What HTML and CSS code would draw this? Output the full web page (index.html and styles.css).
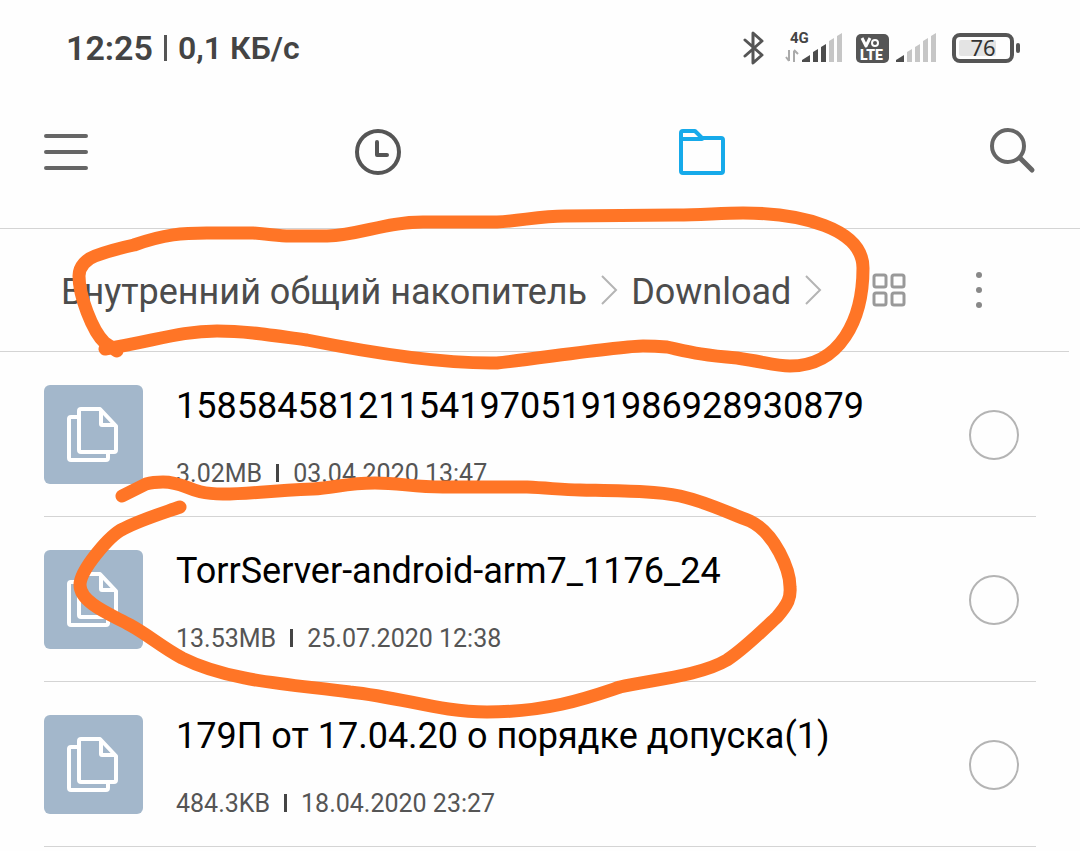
FILE: index.html
```
<!DOCTYPE html>
<html lang="ru">
<head>
    <meta charset="UTF-8">
    <meta name="viewport" content="width=device-width, initial-scale=1">
    <title>Download</title>
    <link rel="stylesheet" href="styles.css">
</head>
<body>
    <svg class="shapes" aria-hidden="true">
        <symbol id="files" viewBox="0 0 99 99">
            <path d="M33 32H27a2 2 0 0 0-2 2v39a2 2 0 0 0 2 2h35a2 2 0 0 0 2-2v-5" />
            <path d="M37 24h19l16 17v24a2 2 0 0 1-2 2H37a2 2 0 0 1-2-2V26a2 2 0 0 1 2-2z" />
            <path d="M57 25v14a1 1 0 0 0 1 1h13" />
        </symbol>
        <symbol id="chevron" viewBox="0 0 18 32">
            <path d="M2 2l14 14L2 30" />
        </symbol>
    </svg>

    <header class="status">
        <div class="status-left">
            <span class="time">12:25</span>
            <span class="divider"></span>
            <span class="speed">0,1 КБ/с</span>
        </div>
        <div class="status-right">
            <svg class="bluetooth" width="22" height="36" viewBox="0 0 22 36" fill="none" stroke="#555" stroke-width="3" stroke-linejoin="round" stroke-linecap="round">
                <path d="M2 10l17 15-9 8V3l9 8L2 26" />
            </svg>
            <svg class="network" width="58" height="36" viewBox="0 0 58 36">
                <text class="net-type" x="5" y="13">4G</text>
                <path d="M4 20v11M1 27l3 4M9 32V21M13 24l-4-4" fill="none" stroke="#aaa" stroke-width="2" />
                <path d="M17 32v-2l8-5v7zM28 32V22l5-3v13zM36 32V17l5-3v18z" fill="#4c4c4c" />
                <path d="M44 32V11l5-3v24zM52 32V6l5-3v29z" fill="#c6c6c6" />
            </svg>
            <svg class="volte" width="33" height="36" viewBox="0 0 33 36">
                <rect x="0" y="4" width="33" height="29" rx="5" fill="#555" />
                <path d="M6 8l4 8 4-8" fill="none" stroke="#fff" stroke-width="3" stroke-linejoin="round" />
                <circle cx="19" cy="13" r="3" fill="none" stroke="#fff" stroke-width="2" />
                <text class="lte" x="4" y="30">LTE</text>
            </svg>
            <svg class="signal" width="40" height="36" viewBox="0 0 40 36">
                <path d="M0 32v-2l8-5v7z" fill="#4c4c4c" />
                <path d="M11 32V22l5-3v13zM19 32V17l5-3v18zM27 32V11l5-3v24zM35 32V6l5-3v29z" fill="#c6c6c6" />
            </svg>
            <svg class="battery" width="68" height="36" viewBox="0 0 68 36">
                <rect x="2" y="5" width="58" height="26" rx="6" fill="none" stroke="#555" stroke-width="4" />
                <rect x="7" y="10" width="37" height="16" rx="2" fill="#e4e4e4" />
                <rect x="64" y="13" width="4" height="10" rx="2" fill="#555" />
                <text class="charge" x="31" y="26">76</text>
            </svg>
        </div>
    </header>

    <div class="toolbar">
        <button class="menu" aria-label="Меню">
            <svg width="44" height="38" viewBox="0 0 44 38" fill="none" stroke="#666" stroke-width="4" stroke-linecap="round">
                <path d="M2 3h40M2 19h40M2 35h40" />
            </svg>
        </button>
        <nav class="tabs">
            <button aria-label="Недавние">
                <svg width="48" height="48" viewBox="0 0 48 48" fill="none" stroke="#555" stroke-width="4" stroke-linecap="round" stroke-linejoin="round">
                    <circle cx="24" cy="24" r="21" />
                    <path d="M23 14v13h10" />
                </svg>
            </button>
            <button aria-label="Папки">
                <svg width="48" height="48" viewBox="0 0 48 48" fill="none" stroke="#16aaea" stroke-width="4" stroke-linecap="round" stroke-linejoin="round">
                    <path d="M3 11V5a2 2 0 0 1 2-2h12l7 7h19a2 2 0 0 1 2 2v31a2 2 0 0 1-2 2H5a2 2 0 0 1-2-2V11h21" />
                </svg>
            </button>
        </nav>
        <button class="search" aria-label="Поиск">
            <svg width="48" height="48" viewBox="0 0 48 48" fill="none" stroke="#666" stroke-width="4" stroke-linecap="round">
                <circle cx="20" cy="18" r="16" />
                <path d="M32 30l12 12" stroke-width="5" />
            </svg>
        </button>
    </div>

    <div class="path">
        <nav class="crumbs">
            <a href="#">Внутренний общий накопитель</a>
            <svg class="chevron"><use href="#chevron" /></svg>
            <a href="#">Download</a>
            <svg class="chevron"><use href="#chevron" /></svg>
        </nav>
        <button class="view" aria-label="Вид">
            <svg width="34" height="34" viewBox="0 0 34 34" fill="none" stroke="#999" stroke-width="3">
                <rect x="2" y="2" width="12" height="12" rx="2" />
                <rect x="20" y="2" width="12" height="12" rx="2" />
                <rect x="2" y="20" width="12" height="12" rx="2" />
                <rect x="20" y="20" width="12" height="12" rx="2" />
            </svg>
        </button>
        <button class="more" aria-label="Ещё">
            <svg width="6" height="36" viewBox="0 0 6 36" fill="#888">
                <circle cx="3" cy="3" r="3" />
                <circle cx="3" cy="18" r="3" />
                <circle cx="3" cy="33" r="3" />
            </svg>
        </button>
    </div>

    <ul class="files">
        <li class="file">
            <svg class="thumb"><use href="#files" /></svg>
            <label class="info" for="file1">
                <span class="name">1585845812115419705191986928930879</span>
                <span class="meta">3.02MB <i class="bar"></i> 03.04.2020 13:47</span>
            </label>
            <input type="checkbox" id="file1">
        </li>
        <li class="file">
            <svg class="thumb"><use href="#files" /></svg>
            <label class="info" for="file2">
                <span class="name">TorrServer-android-arm7_1176_24</span>
                <span class="meta">13.53MB <i class="bar"></i> 25.07.2020 12:38</span>
            </label>
            <input type="checkbox" id="file2">
        </li>
        <li class="file">
            <svg class="thumb"><use href="#files" /></svg>
            <label class="info" for="file3">
                <span class="name">179П от 17.04.20 о порядке допуска(1)</span>
                <span class="meta">484.3KB <i class="bar"></i> 18.04.2020 23:27</span>
            </label>
            <input type="checkbox" id="file3">
        </li>
    </ul>

    <!-- hand-drawn marks over the path and the second file -->
    <svg class="marks" viewBox="0 0 1080 851" aria-hidden="true">
        <path d="M117 351L105 343C92 331 79 295 79 276C79 266 87 259 95 256C103 253 115 249 134 245C165 234 183 233 207 233H253C270 234 278 236 290 236H327C360 235 385 222 423 222H497C520 221 540 216 565 216L677 215C700 215 722 213 743 213C800 213 863 228 863 268C863 320 840 366 790 366C775 366 765 362 737 358C700 355 690 352 667 347Q655 346 643 346C620 346 535 359 497 363C435 364 357 350 307 340C270 335 245 331 217 331C180 331 155 341 105 349" />
        <path d="M122 496L146 484Q153 482 163 482C187 482 187 494 223 494C250 494 263 491 313 489C335 488 345 483 375 483C400 483 413 487 443 487H527C550 488 563 490 580 490C625 491 655 491 680 496C710 503 728 513 750 521C775 533 790 570 790 587C791 598 788 604 777 617C762 631 744 649 727 660C700 676 650 680 620 687C590 697 550 712 487 712C440 712 405 698 350 692C290 684 230 682 182 658C160 646 150 636 130 625C112 615 80 603 80 585C80 570 110 535 123 529C140 520 160 514 180 507" />
    </svg>
</body>
</html>
```

FILE: styles.css
```
* {
    box-sizing: border-box;
}

body {
    margin: 0;
    position: relative;
    font-family: Roboto, sans-serif;
    background-color: #fefefe;
    color: #000;
}

button {
    display: flex;
    padding: 0;
    border: none;
    background: none;
    cursor: pointer;
}

.shapes {
    display: none;
}

/* status bar */
.status {
    display: flex;
    justify-content: space-between;
    align-items: center;
    height: 96px;
    padding: 0 60px 0 66px;
    color: #444;
}

.status-left,
.status-right {
    display: flex;
    align-items: center;
}

.status-left {
    gap: 11px;
    font-weight: 600;
}

.time {
    font-size: 34px;
}

.speed {
    font-size: 32px;
}

.divider {
    width: 3px;
    height: 26px;
    background-color: #555;
}

.bluetooth {
    margin-right: 20px;
}

.network {
    margin-right: 13px;
}

.volte {
    margin-right: 7px;
}

.signal {
    margin-right: 16px;
}

.net-type {
    font-size: 15px;
    font-weight: 700;
    fill: #444;
}

.lte {
    font-size: 14px;
    font-weight: 900;
    fill: #fff;
}

.charge {
    font-family: "Noto Sans", sans-serif;
    font-size: 22px;
    text-anchor: middle;
    fill: #333;
}

/* toolbar */
.toolbar {
    display: grid;
    grid-template-columns: 20% 60% 20%;
    align-items: center;
    height: 133px;
    padding-bottom: 20px;
    border-bottom: 1px solid #d4d4d4;
}

.menu {
    padding-left: 44px;
}

.tabs {
    display: grid;
    grid-template-columns: 1fr 1fr;
    justify-items: center;
}

.search {
    justify-self: end;
    padding-right: 44px;
}

/* current folder */
.path {
    display: flex;
    align-items: center;
    height: 123px;
    margin-right: 11px;
    padding: 0 87px 0 61px;
    border-bottom: 1px solid #d4d4d4;
}

.crumbs {
    display: flex;
    flex: 1;
    align-items: center;
    gap: 13px;
    font-size: 36px;
    line-height: 42px;
    white-space: nowrap;
}

.crumbs a {
    padding-top: 4px;
    color: #4c4c4c;
    text-decoration: none;
}

.chevron {
    width: 18px;
    height: 32px;
    fill: none;
    stroke: #b4b4b4;
    stroke-width: 2px;
}

.more {
    margin-left: 70px;
}

/* file list */
.files {
    margin: 0;
    padding: 0 44px;
    list-style: none;
}

.file {
    display: flex;
    align-items: center;
    gap: 33px;
    padding: 33px 17px 32px 0;
    border-bottom: 1px solid #d4d4d4;
}

.thumb {
    flex: none;
    width: 99px;
    height: 99px;
    border-radius: 6px;
    background-color: #a3b7cb;
    fill: none;
    stroke: #fff;
    stroke-width: 4px;
    stroke-linejoin: round;
}

.info {
    display: flex;
    flex: 1;
    flex-direction: column;
    justify-content: space-between;
    height: 99px;
}

.name {
    font-size: 36px;
    line-height: 42px;
}

.meta {
    display: flex;
    gap: 14px;
    font-size: 25px;
    line-height: 20px;
    color: #555;
}

.bar {
    width: 3px;
    height: 18px;
    background-color: #444;
}

.file input {
    appearance: none;
    flex: none;
    width: 50px;
    height: 50px;
    margin: 0;
    border: 2px solid #b4b4b4;
    border-radius: 50%;
    cursor: pointer;
}

.marks {
    position: absolute;
    top: 0;
    left: 0;
    width: 100%;
    fill: none;
    stroke: #ff7526;
    stroke-width: 13px;
    stroke-linecap: round;
    stroke-linejoin: round;
    pointer-events: none;
}
```
